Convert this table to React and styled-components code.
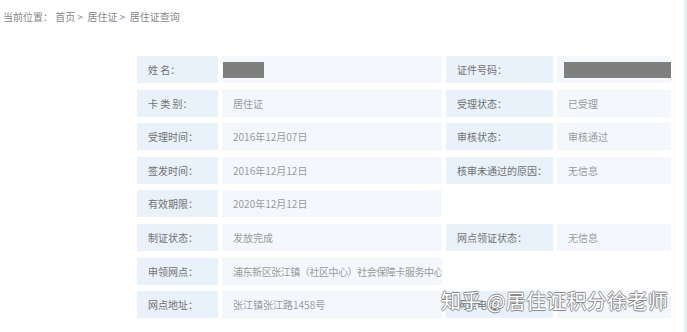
import React from "react";
import styled, { createGlobalStyle } from "styled-components";

const GlobalStyle = createGlobalStyle`
  html, body {
    margin: 0;
    padding: 0;
    background: #fff;
  }
  body {
    font-family: "Noto Sans CJK SC", "Noto Sans", sans-serif;
  }
`;

const Page = styled.div`
  position: relative;
  width: 687px;
  height: 332px;
  overflow: hidden;
  border-right: 3px solid #e8eef2;
  box-sizing: border-box;
`;

const Breadcrumb = styled.div`
  padding: 10px 0 0 3px;
  height: 14px;
  line-height: 14px;
  font-size: 10px;
  color: #888;
  white-space: pre;
`;

const Table = styled.div`
  display: grid;
  grid-template-columns: 81px 220px 107px 114px;
  grid-auto-rows: 27px;
  column-gap: 4px;
  row-gap: 6.6px;
  margin: 32px 0 0 137px;
`;

const Cell = styled.div`
  display: flex;
  align-items: center;
  padding-left: 11px;
  background: ${(p) => (p.$empty ? "transparent" : p.$label ? "#e9f2fb" : "#f4f8fd")};
  font-size: 10px;
  letter-spacing: ${(p) => (p.$tight ? "-0.45px" : "0")};
  color: ${(p) => (p.$label ? "#707070" : "#9a9a9a")};
  white-space: pre;
  overflow: hidden;
`;

const Redacted = styled.span`
  display: block;
  width: ${(p) => p.$w}px;
  height: 16px;
  margin-left: ${(p) => p.$ml}px;
  background: #7f7f7f;
`;

const Watermark = styled.div`
  position: absolute;
  left: 441px;
  top: 288px;
  font-size: 20px;
  line-height: 26px;
  color: #fff;
  text-shadow: 0.7px 0 #8a8a8a, -0.7px 0 #8a8a8a, 0 0.7px #8a8a8a,
    0 -0.7px #8a8a8a, 0 0 2px rgba(0, 0, 0, 0.35);
  white-space: pre;
  letter-spacing: 0.3px;
`;

const rows = [
  ["姓 名：", "#name", "证件号码：", "#id"],
  ["卡 类 别：", "居住证", "受理状态：", "已受理"],
  ["受理时间：", "2016年12月07日", "审核状态：", "审核通过"],
  ["签发时间：", "2016年12月12日", "核审未通过的原因：", "无信息"],
  ["有效期限：", "2020年12月12日", null, null],
  ["制证状态：", "发放完成", "网点领证状态：", "无信息"],
  ["申领网点：", "浦东新区张江镇（社区中心）社会保障卡服务中心", null, null],
  ["网点地址：", "张江镇张江路1458号", "网点电话：", ""],
];

const renderValue = (v) => {
  if (v === "#name") return <Redacted $w={41} $ml={-10} />;
  if (v === "#id") return <Redacted $w={107} $ml={-4} />;
  return v;
};

export default function App() {
  return (
    <Page>
      <GlobalStyle />
      <Breadcrumb>当前位置： 首页 &gt;  居住证 &gt;  居住证查询</Breadcrumb>
      <Table>
        {rows.map(([l1, v1, l2, v2], i) => (
          <React.Fragment key={i}>
            <Cell $label>{l1}</Cell>
            <Cell $tight={typeof v1 === "string" && v1.length > 16}>{renderValue(v1)}</Cell>
            <Cell $label $empty={l2 === null}>{l2}</Cell>
            <Cell $empty={v2 === null}>{v2 === null ? null : renderValue(v2)}</Cell>
          </React.Fragment>
        ))}
      </Table>
      <Watermark>知乎 @居住证积分徐老师</Watermark>
    </Page>
  );
}
